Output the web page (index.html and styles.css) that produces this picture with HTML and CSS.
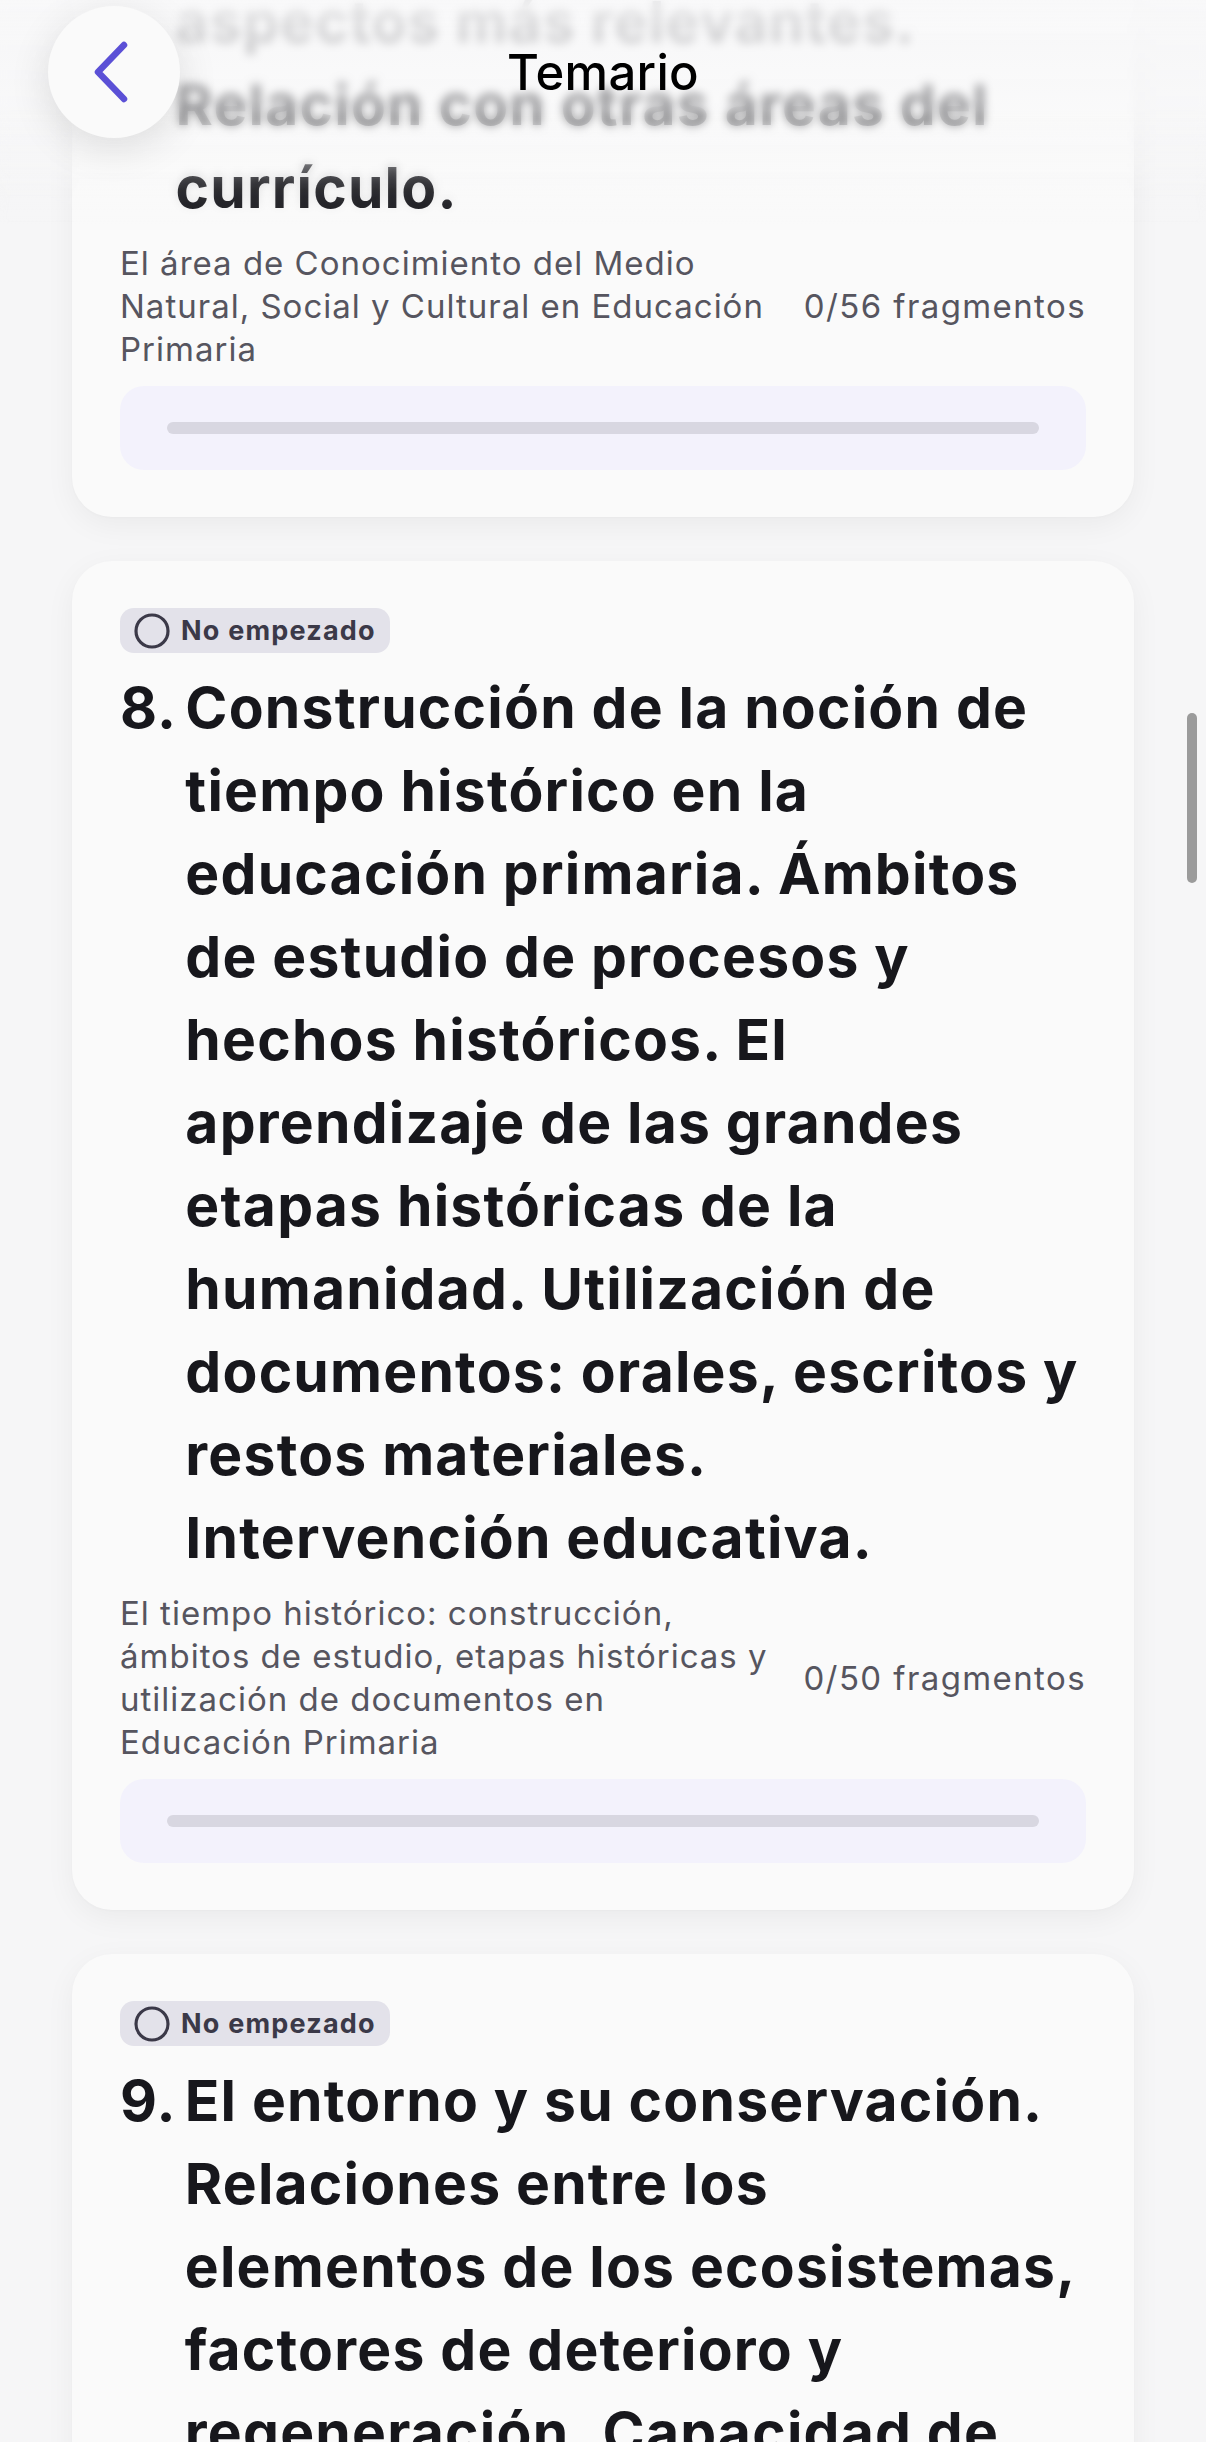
FILE: index.html
```html
<!DOCTYPE html>
<html lang="es">
<head>
<meta charset="utf-8">
<title>Temario</title>
<link rel="stylesheet" href="styles.css">
</head>
<body>
<div class="screen">
  <main class="topics">
    <article class="topic">
      <span class="status">
        <svg class="status-icon" viewBox="0 0 36 36"><circle cx="18" cy="18" r="16" fill="none" stroke="currentColor" stroke-width="3.2"/></svg>
        No empezado
      </span>
      <h2 class="topic-title"><span class="topic-num">7.</span><span class="topic-text">El área de Conocimiento del Medio Natural, Social y Cultural en la Educación Primaria. Enfoque, características y propuestas de intervención educativa. Elementos básicos del área:<br>aspectos más relevantes. Relación con otras áreas del currículo.</span></h2>
      <div class="topic-meta">
        <p class="topic-desc">El área de Conocimiento del Medio Natural, Social y Cultural en Educación Primaria</p>
        <span class="topic-count">0/56 fragmentos</span>
      </div>
      <div class="progress"><div class="progress-track"><div class="progress-fill" style="width:0%"></div></div></div>
    </article>

    <article class="topic">
      <span class="status">
        <svg class="status-icon" viewBox="0 0 36 36"><circle cx="18" cy="18" r="16" fill="none" stroke="currentColor" stroke-width="3.2"/></svg>
        No empezado
      </span>
      <h2 class="topic-title"><span class="topic-num">8.</span><span class="topic-text">Construcción de la noción de tiempo histórico en la educación primaria. Ámbitos de estudio de procesos y hechos históricos. El aprendizaje de las grandes etapas históricas de la humanidad. Utilización de documentos: orales, escritos y restos materiales. Intervención educativa.</span></h2>
      <div class="topic-meta">
        <p class="topic-desc">El tiempo histórico: construcción, ámbitos de estudio, etapas históricas y utilización de documentos en Educación Primaria</p>
        <span class="topic-count">0/50 fragmentos</span>
      </div>
      <div class="progress"><div class="progress-track"><div class="progress-fill" style="width:0%"></div></div></div>
    </article>

    <article class="topic">
      <span class="status">
        <svg class="status-icon" viewBox="0 0 36 36"><circle cx="18" cy="18" r="16" fill="none" stroke="currentColor" stroke-width="3.2"/></svg>
        No empezado
      </span>
      <h2 class="topic-title"><span class="topic-num">9.</span><span class="topic-text">El entorno y su conservación. Relaciones entre los elementos de los ecosistemas, factores de deterioro y regeneración. Capacidad de las personas para actuar sobre la naturaleza. Intervención educativa.</span></h2>
      <div class="topic-meta">
        <p class="topic-desc">El entorno y su conservación: ecosistemas, deterioro, regeneración e intervención educativa</p>
        <span class="topic-count">0/48 fragmentos</span>
      </div>
      <div class="progress"><div class="progress-track"><div class="progress-fill" style="width:0%"></div></div></div>
    </article>
  </main>

  <header class="topbar">
    <div class="topbar-blur"></div>
    <div class="topbar-fade"></div>
    <button class="back" aria-label="Volver">
      <svg viewBox="0 0 40 64" width="40" height="64"><path d="M34 5 L8 32 L34 59" fill="none" stroke="#5b50d6" stroke-width="6.5" stroke-linecap="round" stroke-linejoin="round"/></svg>
    </button>
    <h1 class="topbar-title">Temario</h1>
  </header>

  <div class="scrollbar"></div>
</div>
</body>
</html>
```

FILE: styles.css
```css
* { box-sizing: border-box; }

html, body {
  margin: 0;
  padding: 0;
}

body {
  background: #f6f6f7;
  font-family: "Inter", "Noto Sans", sans-serif;
  color: #17171c;
  overflow: hidden;
}

.screen {
  position: relative;
  width: 1206px;
  height: 2442px;
  overflow: hidden;
}

/* list of syllabus topics, scrolled so that topic 8 sits in view */
.topics {
  display: flex;
  flex-direction: column;
  gap: 44px;
  padding: 0 72px;
  margin-top: -706px;
}

.topic {
  display: flex;
  flex-direction: column;
  gap: 13px;
  padding: 47px 48px;
  background: #fafafa;
  border-radius: 40px;
  box-shadow: 0 8px 30px rgba(0, 0, 0, 0.05), 0 1px 3px rgba(0, 0, 0, 0.02);
}

.status {
  align-self: flex-start;
  display: inline-flex;
  align-items: center;
  gap: 11px;
  height: 45px;
  padding: 0 14px;
  border-radius: 14px;
  background: #e3e2ea;
  color: #3b3948;
  font-size: 27px;
  font-weight: 700;
  letter-spacing: 1.2px;
}

.status-icon {
  width: 36px;
  height: 36px;
  flex-shrink: 0;
}

.topic-title {
  display: flex;
  gap: 8px;
  margin: 0;
  font-size: 57px;
  font-weight: 700;
  line-height: 83px;
  letter-spacing: 1.2px;
  color: #17171c;
}

.topic-num { flex-shrink: 0; }

.topic-meta {
  display: flex;
  align-items: center;
  color: #56555f;
  font-size: 33px;
  line-height: 43px;
  letter-spacing: 1px;
}

.topic-desc {
  flex: 0 1 662px;
  margin: 0;
}

.topic-count {
  flex-shrink: 0;
  margin-left: auto;
  white-space: nowrap;
  letter-spacing: 1.4px;
}

.progress {
  display: flex;
  align-items: center;
  height: 84px;
  margin-top: 2px;
  padding: 0 47px;
  border-radius: 24px;
  background: #f3f2fc;
}

.progress-track {
  flex: 1;
  height: 12px;
  border-radius: 6px;
  background: #d8d7e1;
  overflow: hidden;
}

.progress-fill {
  height: 100%;
  background: #5b50d6;
}

/* navigation bar floating over the list */
.topbar {
  position: absolute;
  top: 0;
  left: 0;
  right: 0;
  height: 225px;
  pointer-events: none;
}

.topbar-blur {
  position: absolute;
  inset: 0;
  backdrop-filter: blur(5px);
  -webkit-backdrop-filter: blur(5px);
  -webkit-mask-image: linear-gradient(to bottom, #000 0%, #000 45%, rgba(0,0,0,0.15) 80%, transparent 100%);
  mask-image: linear-gradient(to bottom, #000 0%, #000 45%, rgba(0,0,0,0.15) 80%, transparent 100%);
}

.topbar-fade {
  position: absolute;
  inset: 0;
  background: linear-gradient(to bottom,
    rgba(248, 248, 249, 0.92) 0px,
    rgba(248, 248, 249, 0.82) 40px,
    rgba(248, 248, 249, 0.55) 110px,
    rgba(248, 248, 249, 0.06) 190px,
    rgba(248, 248, 249, 0) 225px);
}

.back {
  position: absolute;
  left: 48px;
  top: 6px;
  width: 132px;
  height: 132px;
  border: 0;
  border-radius: 50%;
  background: #fafafa;
  box-shadow: 0 10px 40px rgba(0, 0, 0, 0.12);
  display: flex;
  align-items: center;
  justify-content: center;
  padding: 0 8px 0 0;
}

.topbar-title {
  position: absolute;
  left: 0;
  right: 0;
  top: 44px;
  margin: 0;
  text-align: center;
  font-size: 49px;
  line-height: 58px;
  font-weight: 500;
  letter-spacing: 0.3px;
  color: #000;
}

.scrollbar {
  position: absolute;
  right: 9px;
  top: 713px;
  width: 10px;
  height: 170px;
  border-radius: 5px;
  background: #9b9b9b;
}
```
